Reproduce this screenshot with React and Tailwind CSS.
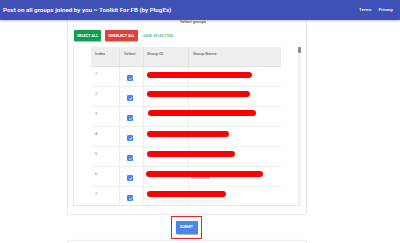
import React from "react";

const rows = [
  { i: 1, top: 5, w: 105, l: 56 },
  { i: 2, top: 4, w: 103, l: 56 },
  { i: 3, top: 3, w: 108, l: 57 },
  { i: 4, top: 4, w: 82, l: 56 },
  { i: 5, top: 4, w: 88, l: 56 },
  { i: 6, top: 4, w: 117, l: 55, name: "Muchecklist" },
  { i: 7, top: 4, w: 79, l: 56 },
];

function Check() {
  return (
    <div className="w-[6px] h-[6px] bg-[#4a86e8] rounded-[1px] flex items-center justify-center">
      <svg width="5" height="5" viewBox="0 0 10 10">
        <path d="M2 5.2 L4.2 7.3 L8 2.8" stroke="white" strokeWidth="1.6" fill="none" />
      </svg>
    </div>
  );
}

export default function App() {
  return (
    <div className="w-[400px] h-[243px] overflow-hidden bg-white font-['Roboto',sans-serif] relative">
      {/* Header */}
      <div className="h-[20px] bg-[#3f51b5] flex items-center justify-between pl-[3px] pr-[7px] shadow-[0_1px_2px_rgba(0,0,0,0.25)] relative z-10">
        <span className="text-white text-[6.25px] font-semibold leading-none">
          Post on all groups joined by you ~ Toolkit For FB (by PlugEx)
        </span>
        <div className="flex gap-[7px] text-white text-[4.4px] font-medium leading-none">
          <span>Terms</span>
          <span>Privacy</span>
        </div>
      </div>

      {/* Card */}
      <div className="ml-[68px] w-[238px] h-[194px] bg-white shadow-[0_0_1.5px_rgba(0,0,0,0.35)] flex flex-col">
        <div className="text-center text-[4.3px] text-[#333] leading-none pt-[0px] h-[10px] pl-[12px]">Select groups</div>
        <div className="flex items-center gap-[4px] pl-[6px] h-[11px]">
          <div className="w-[27px] h-[11px] bg-[#0f9d58] rounded-[1px] text-white text-[3.8px] font-bold flex items-center justify-center shadow-[0_0.5px_1px_rgba(0,0,0,0.3)]">SELECT ALL</div>
          <div className="w-[33px] h-[11px] bg-[#db4437] rounded-[1px] text-white text-[3.8px] font-bold flex items-center justify-center shadow-[0_0.5px_1px_rgba(0,0,0,0.3)]">UNSELECT ALL</div>
          <div className="text-[#3cb371] text-[3.8px] font-medium ml-[1px]">SAVE SELECTION</div>
        </div>
        {/* Scroll container */}
        <div className="mt-[6px] ml-[5px] w-[228px] h-[159px] flex border-l border-b border-[#e6e6e6] overflow-hidden">
          <div className="w-[224px] pl-[17px] pr-[17px]">
            <div className="w-[190px] text-[4.2px] text-[#444]">
              <div className="flex h-[20px] bg-[#eeeeee] border-b border-[#e2e2e2]">
                <div className="w-[29px] pl-[4px] pt-[4px] border-r border-[#e2e2e2]">Index</div>
                <div className="w-[24px] pl-[4px] pt-[4px] border-r border-[#e2e2e2]">Select</div>
                <div className="w-[45px] pl-[3px] pt-[4px] border-r border-[#e2e2e2]">Group ID</div>
                <div className="flex-1 pl-[4px] pt-[4px]">Group Name</div>
              </div>
              {rows.map((r) => (
                <div key={r.i} className="relative flex h-[20px] border-b border-[#eeeeee]">
                  <div className="w-[29px] pl-[4px] pt-[4px] border-r border-[#eeeeee] text-[3.8px] text-[#777]">{r.i}</div>
                  <div className="w-[24px] pl-[7px] pt-[8px] border-r border-[#eeeeee]">
                    <Check />
                  </div>
                  <div className="w-[45px] border-r border-[#eeeeee]"></div>
                  <div className="flex-1 pl-[2px] pt-[9px] text-[3.5px] text-[#6a5acd]">{r.name || ""}</div>
                  <div
                    className="absolute h-[6px] bg-[#ff0000] rounded-full"
                    style={{ left: r.l, top: r.top, width: r.w }}
                  ></div>
                </div>
              ))}
            </div>
          </div>
          <div className="w-[4px] bg-[#f1f1f1] flex flex-col">
            <div className="h-[6px] bg-[#8a8a8a] rounded-[1px]"></div>
          </div>
        </div>
      </div>

      {/* Submit */}
      <div className="ml-[171px] mt-[2px] w-[31px] h-[23px] border-[1.5px] border-[#e8202a] flex items-center justify-center">
        <div className="w-[22px] h-[13px] bg-[#4a86e8] text-white text-[3.5px] font-bold flex items-center justify-center shadow-[0_0.5px_1px_rgba(0,0,0,0.3)]">SUBMIT</div>
      </div>

      {/* Next card */}
      <div className="ml-[68px] mt-[2px] w-[238px] h-[20px] bg-white shadow-[0_0_1.5px_rgba(0,0,0,0.3)]"></div>
    </div>
  );
}
